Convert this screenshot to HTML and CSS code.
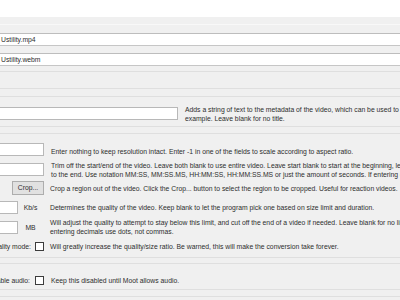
FILE: index.html
```html
<!DOCTYPE html>
<html>
<head>
<meta charset="utf-8">
<link rel="stylesheet" href="styles.css">
</head>
<body>
<div class="top"></div>
<div class="sep s1"></div>
<div class="file f1">Ustility.mp4</div>
<div class="file f2">Ustility.webm</div>
<div class="sep s2"></div>
<div class="sep s3"></div>
<div class="sep s4"></div>

<div class="row title-row">
  <div class="box wide"></div>
  <div class="desc two">Adds a string of text to the metadata of the video, which can be used to<br>example. Leave blank for no title.</div>
</div>

<div class="sep s5"></div>
<div class="sep s6"></div>

<div class="row res-row">
  <div class="box mid"></div>
  <div class="desc one">Enter nothing to keep resolution intact. Enter -1 in one of the fields to scale according to aspect ratio.</div>
</div>

<div class="row trim-row">
  <div class="box mid"></div>
  <div class="desc two">Trim off the start/end of the video. Leave both blank to use entire video. Leave start blank to start at the beginning, leave end blank to go<br>to the end. Use notation MM:SS, MM:SS.MS, HH:MM:SS, HH:MM:SS.MS or just the amount of seconds. If entering decimals use dots.</div>
</div>

<div class="row crop-row">
  <div class="btn">Crop...</div>
  <div class="desc one">Crop a region out of the video. Click the Crop... button to select the region to be cropped. Useful for reaction videos.</div>
</div>

<div class="row kb-row">
  <div class="box small"></div>
  <div class="unit">Kb/s</div>
  <div class="desc one">Determines the quality of the video. Keep blank to let the program pick one based on size limit and duration.</div>
</div>

<div class="row mb-row">
  <div class="box small"></div>
  <div class="unit">MB</div>
  <div class="desc two">Will adjust the quality to attempt to stay below this limit, and cut off the end of a video if needed. Leave blank for no limit. When<br>entering decimals use dots, not commas.</div>
</div>

<div class="row hq-row">
  <div class="label"><span>High quality mode:</span></div>
  <div class="check"></div>
  <div class="desc one">Will greatly increase the quality/size ratio. Be warned, this will make the conversion take forever.</div>
</div>

<div class="sep s7"></div>
<div class="sep s8"></div>

<div class="row audio-row">
  <div class="label la"><span>Enable audio:</span></div>
  <div class="check ca"></div>
  <div class="desc one a">Keep this disabled until Moot allows audio.</div>
</div>

<div class="sep s9"></div>
<div class="sep s10"></div>
</body>
</html>
```

FILE: styles.css
```css
html, body {
  margin: 0;
  padding: 0;
  width: 400px;
  height: 300px;
  overflow: hidden;
  background: #f0f0f0;
  font-family: "Liberation Sans", Arial, sans-serif;
  font-size: 6.8px;
  color: #2e2e2e;
}
.top {
  height: 17px;
  background: #ffffff;
}
.sep {
  height: 0;
  border-top: 1px solid #dfdfdf;
}
.s1 { margin-top: 7px; border-top-color: #f8f8f8; }
.s2 { margin-top: 5px; }
.s3 { margin-top: 16px; }
.s4 { margin-top: 7px; }
.s5 { margin-top: 3px; }
.s6 { margin-top: 6px; }
.s7 { margin-top: 6px; }
.s8 { margin-top: 5px; }
.s9 { margin-top: 4px; }
.s10 { margin-top: 6px; }

.file {
  box-sizing: border-box;
  height: 13px;
  background: #ffffff;
  border-top: 1px solid #bdbdbd;
  border-bottom: 1px solid #c6c6c6;
  padding-left: 1px;
  line-height: 11px;
  white-space: nowrap;
}
.f1 { margin-top: 8px; }
.f2 { margin-top: 7px; }

.row {
  display: flex;
  align-items: flex-start;
  white-space: nowrap;
}
.box {
  box-sizing: border-box;
  height: 13px;
  background: #ffffff;
  border: 1px solid #b8b8b8;
  border-left: none;
  flex: none;
}
.wide { width: 178px; }
.mid { width: 44px; }
.small { width: 18px; }

.desc {
  line-height: 9px;
  margin-left: 7px;
}
.two { margin-top: -2px; }
.one { margin-top: 3px; }

.title-row { margin-top: 10px; height: 16px; }
.res-row { margin-top: 9px; }
.res-row .one { margin-top: 4px; }
.trim-row { margin-top: 7px; height: 13px; }
.trim-row .two { margin-top: -2.5px; }

.crop-row { margin-top: 5px; }
.btn {
  box-sizing: border-box;
  flex: none;
  margin-left: 12px;
  width: 32px;
  height: 14px;
  background: #e1e1e1;
  border: 1px solid #adadad;
  text-align: center;
  line-height: 12px;
}
.crop-row .desc { margin-left: 6px; margin-top: 2.5px; }

.kb-row { margin-top: 6px; }
.mb-row { margin-top: 7px; height: 13px; }
.unit {
  flex: none;
  width: 25px;
  text-align: center;
  line-height: 9px;
  margin-top: 2px;
}
.kb-row .desc { margin-top: 2px; }
.mb-row .two { margin-top: -3.5px; }

.hq-row { margin-top: 7px; height: 10px; align-items: center; }
.audio-row { margin-top: 11px; height: 10px; align-items: center; }
.label {
  flex: none;
  width: 31px;
  display: flex;
  justify-content: flex-end;
  overflow: hidden;
  line-height: 9px;
}
.label.la { width: 30px; }
.label span { flex: none; }
.check {
  box-sizing: border-box;
  flex: none;
  width: 9px;
  height: 9px;
  margin-left: 4px;
  background: #ffffff;
  border: 1px solid #3c3c3c;
}
.check.ca { margin-left: 5px; }
.hq-row .desc, .audio-row .desc { margin-top: 0; margin-left: 6px; }
.audio-row .desc.a { margin-left: 7px; }
```
